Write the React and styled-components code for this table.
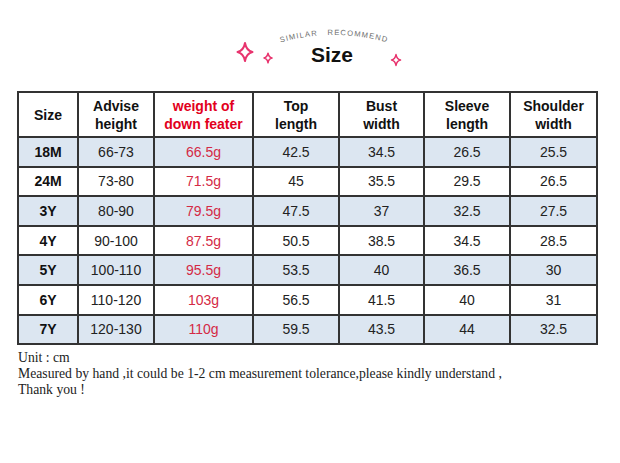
import React from 'react';
import styled, { createGlobalStyle } from 'styled-components';

const Global = createGlobalStyle`
  html, body { margin: 0; padding: 0; background: #fff; }
  body { width: 620px; height: 463px; overflow: hidden; }
`;

const columns = [
  { w: 60, label: ['Size'] },
  { w: 76, label: ['Advise', 'height'] },
  { w: 99, label: ['weight of', 'down feater'], red: true },
  { w: 86, label: ['Top', 'length'] },
  { w: 85, label: ['Bust', 'width'] },
  { w: 86, label: ['Sleeve', 'length'] },
  { w: 87, label: ['Shoulder', 'width'] },
];

const rows = [
  ['18M', '66-73', '66.5g', '42.5', '34.5', '26.5', '25.5'],
  ['24M', '73-80', '71.5g', '45', '35.5', '29.5', '26.5'],
  ['3Y', '80-90', '79.5g', '47.5', '37', '32.5', '27.5'],
  ['4Y', '90-100', '87.5g', '50.5', '38.5', '34.5', '28.5'],
  ['5Y', '100-110', '95.5g', '53.5', '40', '36.5', '30'],
  ['6Y', '110-120', '103g', '56.5', '41.5', '40', '31'],
  ['7Y', '120-130', '110g', '59.5', '43.5', '44', '32.5'],
];

function Sparkle({ cx, cy, r, sw }) {
  const k = r * 0.18;
  const d = `M ${cx} ${cy - r * 1.2} Q ${cx + k} ${cy - k} ${cx + r} ${cy} Q ${cx + k} ${cy + k} ${cx} ${cy + r * 1.2} Q ${cx - k} ${cy + k} ${cx - r} ${cy} Q ${cx - k} ${cy - k} ${cx} ${cy - r * 1.2} Z`;
  return <path d={d} fill="none" stroke="#e8346e" strokeWidth={sw} strokeLinejoin="round" />;
}

function App() {
  return (
    <Page>
      <Global />
      <Banner>
        <SideArt width="42" height="26" viewBox="0 0 42 26">
          <Sparkle cx={11} cy={12} r={7.5} sw={2} />
          <Sparkle cx={34} cy={18} r={4} sw={1.5} />
        </SideArt>
        <TitleBlock>
          <ArcSvg width="130" height="20" viewBox="0 0 130 20">
            <defs>
              <path id="arc" d="M 0 22 Q 65 0 130 22" />
            </defs>
            <ArcText>
              <textPath href="#arc" startOffset="50%" textAnchor="middle">
                SIMILAR&#160;&#160;&#160;RECOMMEND
              </textPath>
            </ArcText>
          </ArcSvg>
          <Title>Size</Title>
        </TitleBlock>
        <RightArt width="14" height="16" viewBox="0 0 14 16">
          <Sparkle cx={6} cy={8} r={4.5} sw={1.5} />
        </RightArt>
      </Banner>

      <Table>
        <colgroup>
          {columns.map((c, i) => <col key={i} style={{ width: c.w }} />)}
        </colgroup>
        <thead>
          <HeadRow>
            {columns.map((c, i) => (
              <HeadCell key={i} $red={c.red}>
                {c.label.map((l, j) => <div key={j}>{l}</div>)}
              </HeadCell>
            ))}
          </HeadRow>
        </thead>
        <tbody>
          {rows.map((r, i) => (
            <BodyRow key={r[0]} $shaded={i % 2 === 0}>
              {r.map((v, j) => (
                <Cell key={j} $bold={j === 0} $red={j === 2}>{v}</Cell>
              ))}
            </BodyRow>
          ))}
        </tbody>
      </Table>

      <Notes>
        <div>Unit : cm</div>
        <div>Measured by hand ,it could be 1-2 cm measurement tolerance,please kindly understand ,</div>
        <div>Thank you !</div>
      </Notes>
    </Page>
  );
}

export default App;

const Page = styled.div`
  width: 620px;
  padding-top: 24px;
`;

const Banner = styled.div`
  display: flex;
  align-items: flex-end;
  padding-left: 234px;
  height: 42px;
`;

const SideArt = styled.svg`
  margin-bottom: 0;
`;

const RightArt = styled.svg`
  margin-bottom: -2px;
`;

const TitleBlock = styled.div`
  display: flex;
  flex-direction: column;
  align-items: center;
  width: 112px;
  margin-left: 2px;
`;

const ArcSvg = styled.svg`
  overflow: visible;
  flex-shrink: 0;
`;

const ArcText = styled.text`
  font-family: "Liberation Sans", Arial, sans-serif;
  font-size: 7.6px;
  letter-spacing: 1.1px;
  fill: #6e6e6e;
`;

const Title = styled.div`
  font-family: "Liberation Sans", Arial, sans-serif;
  font-weight: bold;
  font-size: 21px;
  line-height: 22px;
  color: #111;
  margin-left: -4px;
`;

const Table = styled.table`
  margin: 25px 0 0 17px;
  width: 579px;
  table-layout: fixed;
  border-collapse: collapse;
  font-family: "Liberation Sans", Arial, sans-serif;
  font-size: 14px;
  color: #222;
  td, th { border: 2px solid #333; text-align: center; padding: 0; }
`;

const HeadRow = styled.tr`
  height: 45px;
`;

const HeadCell = styled.th`
  font-weight: bold;
  line-height: 18px;
  color: ${p => (p.$red ? '#e2001c' : '#111')};
`;

const BodyRow = styled.tr`
  height: 29.6px;
  background: ${p => (p.$shaded ? '#dce6f1' : '#fff')};
`;

const Cell = styled.td`
  font-weight: ${p => (p.$bold ? 'bold' : 'normal')};
  color: ${p => (p.$red ? '#d42a45' : p.$bold ? '#111' : '#222')};
`;

const Notes = styled.div`
  margin: 5px 0 0 18px;
  font-family: "Liberation Serif", "Times New Roman", serif;
  font-size: 13.7px;
  line-height: 16px;
  color: #222;
`;
